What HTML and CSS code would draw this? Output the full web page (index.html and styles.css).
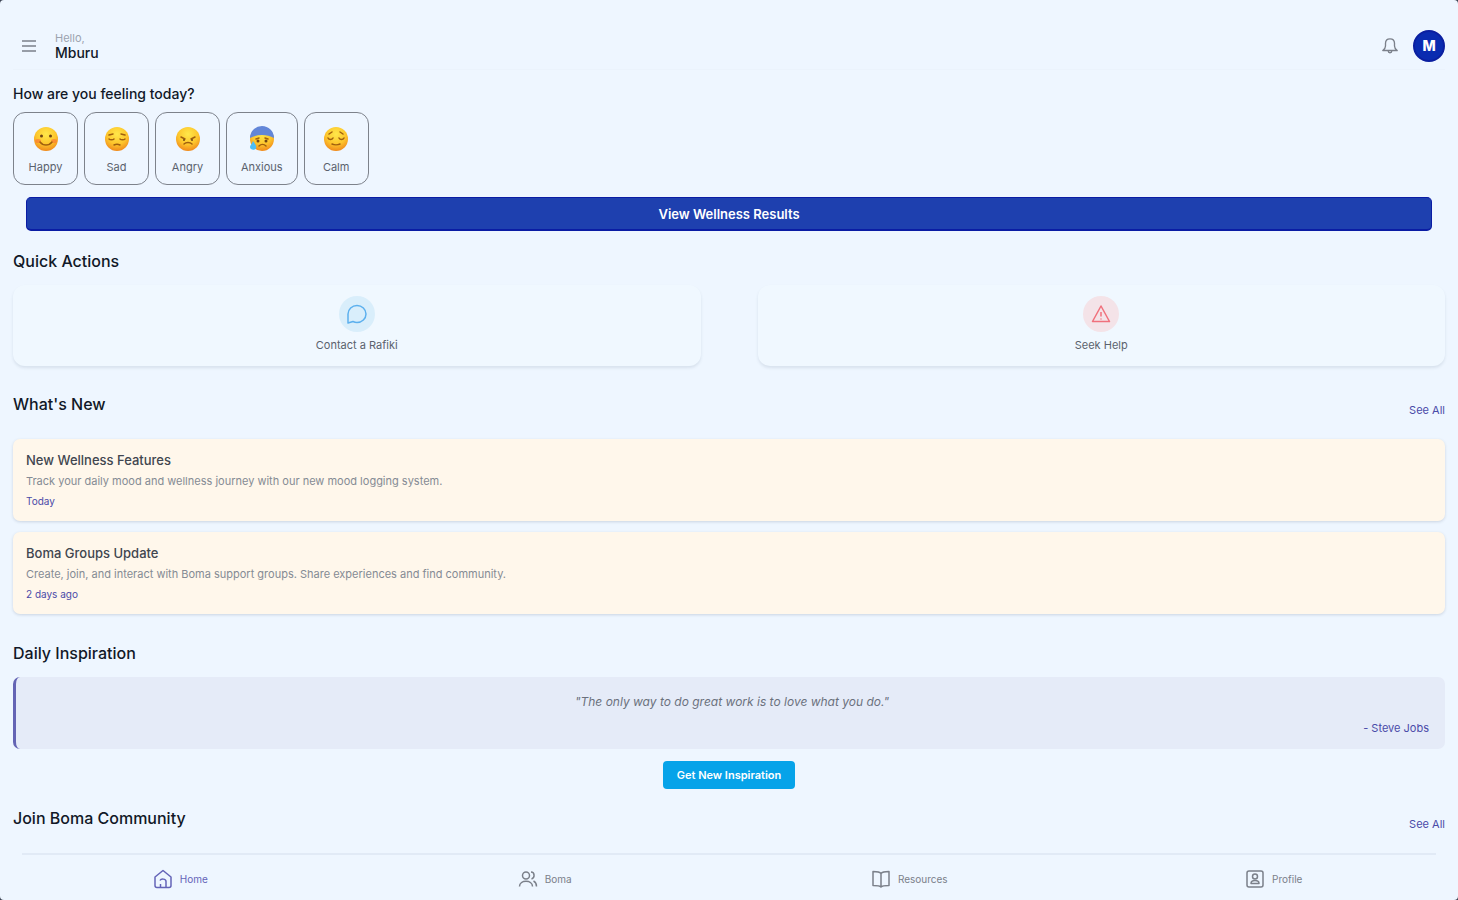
FILE: index.html
```html
<!DOCTYPE html>
<html lang="en">
<head>
    <meta charset="UTF-8">
    <meta name="viewport" content="width=device-width, initial-scale=1.0">
    <title>Home</title>
    <link rel="stylesheet" href="styles.css">
</head>
<body>
    <header class="top-bar">
        <button type="button" class="icon-button" aria-label="Menu">
            <svg width="16" height="16" viewBox="0 0 16 16"><path d="M1 3h14M1 8h14M1 13h14"/></svg>
        </button>
        <div class="greeting">
            <span class="hello">Hello,</span>
            <span class="user-name">Mburu</span>
        </div>
        <button type="button" class="icon-button bell" aria-label="Notifications">
            <svg width="18" height="18" viewBox="0 0 20 20"><path d="M2 15c2-1.500 3-3 3-5V7c0-3 2-5 5-5s5 2 5 5v3c0 2 1 3.500 3 5zM8 15.500c0 1.300.8 2 2 2s2-.7 2-2"/></svg>
        </button>
        <button type="button" class="avatar" aria-label="Account">M</button>
    </header>

    <main>
        <section class="moods">
            <h2 class="mood-title">How are you feeling today?</h2>
            <div class="mood-list">
                <button type="button" class="mood">
                    <svg width="26" height="26" viewBox="0 0 26 26">
                        <defs>
                            <radialGradient id="face" cx="50%" cy="30%" r="70%">
                                <stop offset="0" stop-color="#ffe84a"/>
                                <stop offset="0.6" stop-color="#fdc52c"/>
                                <stop offset="1" stop-color="#f08a1c"/>
                            </radialGradient>
                        </defs>
                        <circle cx="13" cy="13" r="12" fill="url(#face)"/>
                        <ellipse cx="5" cy="15" rx="3" ry="2" fill="#fb7b35" opacity="0.7"/>
                        <ellipse cx="21" cy="15" rx="3" ry="2" fill="#fb7b35" opacity="0.7"/>
                        <circle cx="8.500" cy="10" r="1.500" fill="#704414"/>
                        <circle cx="17.500" cy="10" r="1.500" fill="#704414"/>
                        <path class="face-line" d="M7 16c3 4 9 4 12 0"/>
                    </svg>
                    <span>Happy</span>
                </button>
                <button type="button" class="mood">
                    <svg width="26" height="26" viewBox="0 0 26 26">
                        <circle cx="13" cy="13" r="12" fill="url(#face)"/>
                        <path class="face-line" d="M5 9l4-1M17 8l4 1M5 13c1 1 4 1 5 0M16 13c1 1 4 1 5 0M10 19c2-1 4-1 6 0"/>
                    </svg>
                    <span>Sad</span>
                </button>
                <button type="button" class="mood">
                    <svg width="26" height="26" viewBox="0 0 26 26">
                        <circle cx="13" cy="13" r="12" fill="url(#face)"/>
                        <path class="face-line" d="M6 11l4 2M20 11l-4 2M9 18c2-2 6-2 8 0"/>
                        <circle cx="9" cy="14" r="1" fill="#704414"/>
                        <circle cx="17" cy="14" r="1" fill="#704414"/>
                    </svg>
                    <span>Angry</span>
                </button>
                <button type="button" class="mood">
                    <svg width="26" height="26" viewBox="0 0 26 26">
                        <circle cx="13" cy="13" r="12" fill="url(#face)"/>
                        <path d="M1 12a12 12 0 0 1 24 0c-7-4-17-4-24 0z" fill="#6286d8"/>
                        <path class="face-line" d="M7 13l3-1M16 12l3 1M10 20c2-2 5-2 7 0"/>
                        <circle cx="9" cy="15" r="1.500" fill="#704414"/>
                        <circle cx="17" cy="15" r="1.500" fill="#704414"/>
                        <path d="M4 15c2 3 4 5 3 7-1 3-6 2-6-1 0-2 2-3 3-6z" fill="#4dbdf5"/>
                    </svg>
                    <span>Anxious</span>
                </button>
                <button type="button" class="mood">
                    <svg width="26" height="26" viewBox="0 0 26 26">
                        <circle cx="13" cy="13" r="12" fill="url(#face)"/>
                        <path class="face-line" d="M6 8l3-2M17 6l3 2M5 12c1 2 4 2 5 0M16 12c1 2 4 2 5 0M9 18c2 1 6 1 8 0"/>
                    </svg>
                    <span>Calm</span>
                </button>
            </div>
            <button type="button" class="results-button">View Wellness Results</button>
        </section>

        <section class="quick">
            <h2>Quick Actions</h2>
            <div class="quick-list">
                <button type="button" class="quick-card">
                    <span class="quick-icon chat">
                        <svg width="22" height="22" viewBox="0 0 22 22"><path d="M2 20V11a9 8.500 0 1 1 9 8.500c-2 0-3-.5-4-1z"/></svg>
                    </span>
                    <span>Contact a Rafiki</span>
                </button>
                <button type="button" class="quick-card">
                    <span class="quick-icon alert">
                        <svg width="22" height="22" viewBox="0 0 22 22"><path d="M11 3l8.500 15.500h-17zM11 9v4.500M11 15.500v1"/></svg>
                    </span>
                    <span>Seek Help</span>
                </button>
            </div>
        </section>

        <section class="news">
            <div class="section-head">
                <h2>What's New</h2>
                <a href="#">See All</a>
            </div>
            <article class="news-card">
                <h3>New Wellness Features</h3>
                <p>Track your daily mood and wellness journey with our new mood logging system.</p>
                <time>Today</time>
            </article>
            <article class="news-card">
                <h3>Boma Groups Update</h3>
                <p>Create, join, and interact with Boma support groups. Share experiences and find community.</p>
                <time>2 days ago</time>
            </article>
        </section>

        <section class="inspiration">
            <h2>Daily Inspiration</h2>
            <blockquote>
                <p>"The only way to do great work is to love what you do."</p>
                <cite>- Steve Jobs</cite>
            </blockquote>
            <button type="button" class="inspire-button">Get New Inspiration</button>
        </section>

        <section class="community">
            <div class="section-head">
                <h2>Join Boma Community</h2>
                <a href="#">See All</a>
            </div>
        </section>
    </main>

    <nav class="bottom-nav">
        <a href="#" class="active">
            <svg width="20" height="20" viewBox="0 0 20 20"><path d="M2 8l8-6.500L18 8v8.500a2 2 0 0 1-2 2H4a2 2 0 0 1-2-2zM7.500 18v-3M7 11.500c1-2 6-2 6 1V18"/></svg>
            Home
        </a>
        <a href="#">
            <svg width="20" height="20" viewBox="0 0 20 20"><circle cx="8" cy="6.500" r="3.500"/><path d="M1.500 17.500c0-7 13-7 13 0M13 3c4 0 4 6 .5 7M15.500 12c2 1 3 3 3 5.500"/></svg>
            Boma
        </a>
        <a href="#">
            <svg width="20" height="20" viewBox="0 0 20 20"><path d="M10 4.500C9 3 7 2.500 2 2.500v14c5 0 7 0 8 1.500 1-1.500 3-1.500 8-1.500v-14c-5 0-7 .5-8 2zM10 4.500V18"/></svg>
            Resources
        </a>
        <a href="#">
            <svg width="20" height="20" viewBox="0 0 20 20"><rect x="2" y="2" width="16" height="16" rx="2"/><circle cx="10" cy="7.500" r="2.500"/><path d="M6 14.500c0-4 8-4 8 0z"/></svg>
            Profile
        </a>
    </nav>
</body>
</html>
```
FILE: styles.css
```css
:root {
    --background-color: #eef6ff;
    --primary-color: #1e40af;
    --accent-color: #4a4aa8;
    --sky: #06a3e9;
    --text-color: #111827;
    --muted: #858b94;
}

* {
    box-sizing: border-box;
}

html {
    background-color: #3b4252;
}

body {
    font-family: Inter, "Liberation Sans", sans-serif;
    background-color: var(--background-color);
    color: var(--text-color);
    margin: 0;
    min-height: 100vh;
    display: flex;
    flex-direction: column;
    border-radius: 4px;
}

h2,
h3,
p,
blockquote {
    margin: 0;
}

h2 {
    font-size: 16px;
    line-height: 20px;
    font-weight: 500;
}

button {
    font-family: inherit;
    cursor: pointer;
}

a {
    text-decoration: none;
}

svg {
    display: block;
    fill: none;
    stroke: currentColor;
    stroke-width: 1.5;
    stroke-linejoin: round;
}

/* Header */
.top-bar {
    display: flex;
    align-items: center;
    margin: 0 13px;
    padding: 22px 0 0 8px;
    height: 70px;
    border-bottom: 1px solid #ebf3fc;
}

.icon-button {
    background: none;
    border: none;
    padding: 0;
    color: #7b808a;
}

.greeting {
    display: flex;
    flex-direction: column;
    margin-left: 18px;
}

.hello {
    font-size: 11px;
    line-height: 14px;
    color: #9ca3af;
}

.user-name {
    font-size: 14px;
    line-height: 16px;
    font-weight: 500;
}

.bell {
    margin-left: auto;
    margin-right: 14px;
}

.avatar {
    width: 32px;
    height: 32px;
    border: 2px solid #0b1fa0;
    border-radius: 50%;
    background-color: #0a2bb0;
    color: #ffffff;
    font-size: 14px;
    font-weight: 800;
    padding: 0;
}

main {
    flex-grow: 1;
    padding: 14px 13px 0;
}

/* Mood picker */
.mood-title {
    font-size: 14px;
}

.mood-list {
    display: flex;
    gap: 6px;
    margin-top: 8px;
}

.mood {
    display: flex;
    flex-direction: column;
    align-items: center;
    gap: 8px;
    min-width: 65px;
    height: 73px;
    padding: 13px 14px 0;
    background: none;
    border: 1px solid #7d828b;
    border-radius: 12px;
    color: #5b626d;
    font-size: 11px;
    line-height: 14px;
}

.mood svg {
    stroke: none;
}

.mood .face-line {
    stroke: #a0600e;
    stroke-linecap: round;
}

.results-button {
    display: block;
    width: calc(100% - 26px);
    height: 34px;
    margin: 12px 13px 0;
    background-color: var(--primary-color);
    border: 1px solid #0a1ca4;
    border-bottom-width: 2px;
    border-radius: 5px;
    color: #ffffff;
    font-size: 13px;
    font-weight: 600;
}

/* Quick actions */
.quick {
    margin-top: 20px;
}

.quick-list {
    display: grid;
    grid-template-columns: 1fr 1fr;
    gap: 57px;
    margin-top: 14px;
}

.quick-card {
    display: flex;
    flex-direction: column;
    align-items: center;
    gap: 6px;
    height: 81px;
    padding: 11px 0 0;
    border: none;
    border-radius: 12px;
    background-color: #f0f8ff;
    box-shadow: 0 2px 3px rgba(60, 80, 110, 0.12);
    color: #5b626d;
    font-size: 11px;
    line-height: 14px;
}

.quick-icon {
    display: flex;
    align-items: center;
    justify-content: center;
    width: 36px;
    height: 36px;
    border-radius: 50%;
}

.chat {
    background-color: #d9eefb;
    color: #5cb0ee;
}

.alert {
    background-color: #f4e3e8;
    color: #f0707c;
}

/* News */
.news {
    margin-top: 28px;
}

.section-head {
    display: flex;
    justify-content: space-between;
    margin-bottom: 22px;
}

.section-head a {
    margin-top: 9px;
    font-size: 11px;
    line-height: 14px;
    color: var(--accent-color);
}

.news-card {
    height: 82px;
    margin-bottom: 11px;
    padding: 12px 13px;
    border-radius: 7px;
    background-color: #fff7eb;
    box-shadow: 0 1px 3px rgba(60, 80, 110, 0.2);
}

.news-card h3 {
    font-size: 13px;
    line-height: 18px;
    font-weight: 500;
    color: #41464f;
}

.news-card p {
    font-size: 11px;
    line-height: 16px;
    margin: 4px 0;
    color: var(--muted);
}

.news-card time {
    display: block;
    font-size: 10px;
    line-height: 16px;
    color: var(--accent-color);
}

/* Daily inspiration */
.inspiration {
    margin-top: 29px;
}

blockquote {
    height: 72px;
    margin-top: 14px;
    padding: 16px 16px 0 19px;
    border-left: 3px solid #6464b4;
    border-radius: 7px;
    background-color: #e5ebf8;
}

blockquote p {
    font-size: 12px;
    line-height: 18px;
    font-style: italic;
    text-align: center;
    color: #6b717d;
}

blockquote cite {
    display: block;
    margin-top: 10px;
    font-size: 11px;
    line-height: 14px;
    font-style: normal;
    text-align: right;
    color: var(--accent-color);
}

.inspire-button {
    display: block;
    height: 28px;
    margin: 12px auto 0;
    padding: 0 14px;
    border: none;
    border-radius: 4px;
    background-color: var(--sky);
    color: #ffffff;
    font-size: 11px;
    font-weight: 600;
}

.community {
    margin-top: 19px;
}

.community .section-head {
    margin-bottom: 0;
}

/* Bottom navigation */
.bottom-nav {
    position: sticky;
    bottom: 0;
    display: grid;
    grid-template-columns: repeat(4, 1fr);
    padding-bottom: 5px;
}

.bottom-nav::before {
    content: "";
    grid-column: 1 / -1;
    height: 2px;
    margin: 0 22px;
    background-color: #e1eaf6;
}

.bottom-nav a {
    display: flex;
    align-items: center;
    justify-content: center;
    gap: 7px;
    height: 40px;
    padding: 8px 4px 0 0;
    font-size: 10px;
    color: #7b808a;
}

.bottom-nav .active {
    color: #6464b8;
}
```
